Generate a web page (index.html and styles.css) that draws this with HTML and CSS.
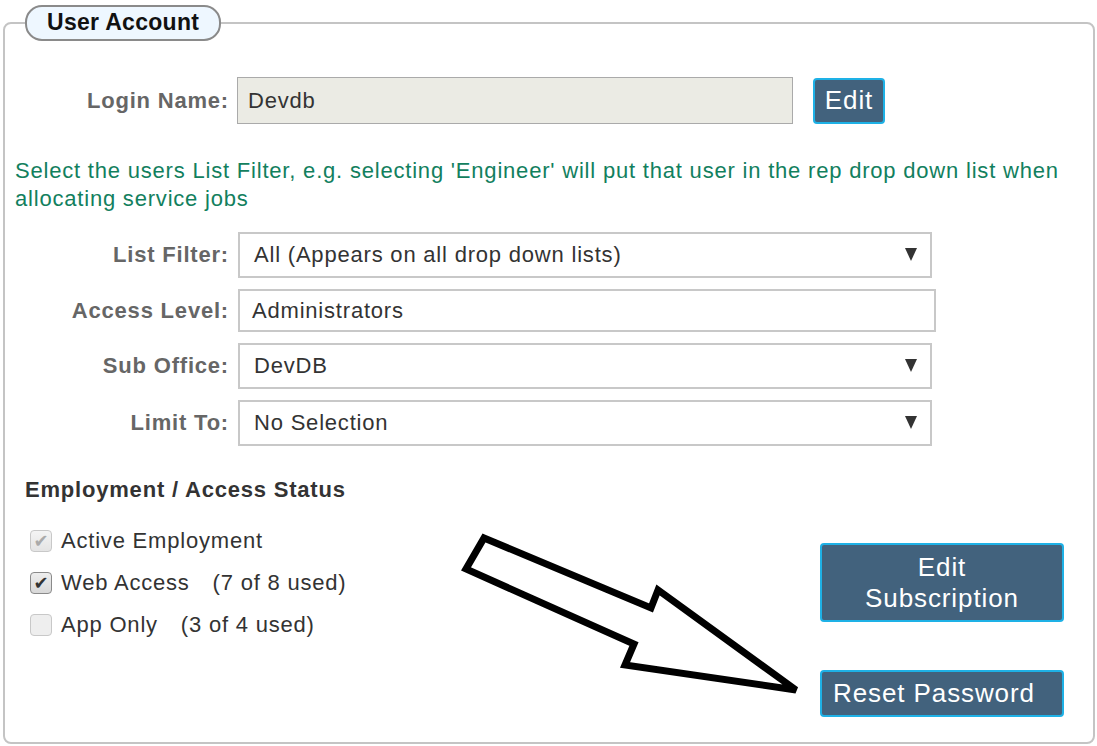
FILE: index.html
```html
<!DOCTYPE html>
<html lang="en">
<head>
  <meta charset="UTF-8" />
  <meta name="viewport" content="width=device-width, initial-scale=1.0" />
  <title>User Account</title>
  <link rel="stylesheet" href="styles.css">
</head>
<body>

  <fieldset class="account">
    <legend class="account-title">User Account</legend>

    <div class="login-row">
      <span class="field-label">Login Name:</span>
      <div class="text-box login-box">Devdb</div>
      <button class="btn btn-edit">Edit</button>
    </div>

    <p class="hint">Select the users List Filter, e.g. selecting 'Engineer' will put that user in the rep drop down list when allocating service jobs</p>

    <div class="form-list">
      <div class="form-row">
        <span class="field-label">List Filter:</span>
        <div class="text-box select-box">All (Appears on all drop down lists)</div>
      </div>
      <div class="form-row">
        <span class="field-label">Access Level:</span>
        <div class="text-box input-box">Administrators</div>
      </div>
      <div class="form-row">
        <span class="field-label">Sub Office:</span>
        <div class="text-box select-box">DevDB</div>
      </div>
      <div class="form-row">
        <span class="field-label">Limit To:</span>
        <div class="text-box select-box">No Selection</div>
      </div>
    </div>

    <div class="status-area">
      <div class="status">
        <h3 class="status-title">Employment / Access Status</h3>
        <ul class="checks">
          <li><span class="check check-disabled">&#10004;</span>Active Employment</li>
          <li><span class="check check-on">&#10004;</span>Web Access <span class="used">(7 of 8 used)</span></li>
          <li><span class="check check-off"></span>App Only <span class="used">(3 of 4 used)</span></li>
        </ul>
      </div>
      <div class="side-buttons">
        <button class="btn btn-sub">Edit<br>Subscription</button>
        <button class="btn btn-reset">Reset Password</button>
      </div>
    </div>
  </fieldset>

  <!-- pointer drawn over the form -->
  <svg class="pointer" width="360" height="180" viewBox="455 526 360 180">
    <path d="M484,538 L651,608 L658,590 L796,690 L625,665 L634,644 L466,569 Z"
          fill="white" stroke="black" stroke-width="7" stroke-linejoin="miter" />
  </svg>

</body>
</html>
```

FILE: styles.css
```css
body {
  margin: 0;
  font-family: "Liberation Sans", Arial, sans-serif;
  background-color: white;
  color: #333;
  position: relative;
}

.account {
  margin: 5px 2px 0 3px;
  padding: 0 10px 0 10px;
  height: 739px;
  box-sizing: border-box;
  border: 2px solid #c4c4c4;
  border-radius: 8px;
  min-width: 0;
}

.account-title {
  margin-left: 10px;
  padding: 2px 20px 3px;
  background-color: #eef7ff;
  border: 2px solid #8a8a8a;
  border-radius: 17px;
  font-size: 23px;
  letter-spacing: 0.3px;
  font-weight: bold;
  color: #111;
}

.field-label {
  width: 214px;
  text-align: right;
  font-size: 22px;
  letter-spacing: 0.8px;
  font-weight: bold;
  color: #666;
  flex-shrink: 0;
  white-space: nowrap;
}

.login-row {
  display: flex;
  align-items: center;
  gap: 8px;
  margin-top: 36px;
}

.text-box {
  box-sizing: border-box;
  border: 2px solid #c8c8c8;
  background-color: white;
  font-size: 22px;
  letter-spacing: 0.8px;
  color: #333;
  display: flex;
  align-items: center;
}

.login-box {
  width: 556px;
  height: 47px;
  padding-left: 10px;
  background-color: #ebebe4;
  border-color: #aaa;
  border-width: 1px;
}

.btn {
  font-family: "Liberation Sans", Arial, sans-serif;
  background-color: #42627d;
  color: white;
  border: 2px solid #1eb1e6;
  border-radius: 4px;
  letter-spacing: 0.9px;
  cursor: pointer;
}

.btn-edit {
  margin-left: 12px;
  width: 72px;
  height: 46px;
  font-size: 26px;
  padding: 0;
}

.hint {
  margin: 33px 0 0;
  font-size: 22px;
  letter-spacing: 0.8px;
  line-height: 28px;
  color: #12805e;
}

.form-list {
  margin-top: 19px;
  display: flex;
  flex-direction: column;
  gap: 11px;
}

.form-row {
  display: flex;
  align-items: center;
  gap: 9px;
}

.select-box {
  width: 694px;
  height: 46px;
  padding-left: 14px;
  position: relative;
}

.select-box::after {
  content: '';
  position: absolute;
  right: 13px;
  top: 14px;
  border-left: 6px solid transparent;
  border-right: 6px solid transparent;
  border-top: 13px solid #333;
}

.input-box {
  width: 698px;
  height: 43px;
  padding-left: 12px;
}

.status-area {
  display: flex;
  justify-content: space-between;
  margin-top: 31px;
}

.status-title {
  margin: 0 0 0 10px;
  font-size: 22px;
  letter-spacing: 0.8px;
  color: #333;
}

.checks {
  list-style: none;
  margin: 17px 0 0;
  padding: 0 0 0 15px;
  font-size: 22px;
  letter-spacing: 0.8px;
}

.checks li {
  display: flex;
  align-items: center;
  height: 42px;
  white-space: pre;
}

.used {
  margin-left: 16px;
}

.check {
  box-sizing: border-box;
  width: 22px;
  height: 22px;
  margin-right: 9px;
  border-radius: 4px;
  border: 1px solid #c8c8c8;
  background: linear-gradient(#f4f4f4, #e4e4e4);
  font-family: "DejaVu Sans", sans-serif;
  font-size: 18px;
  letter-spacing: 0;
  line-height: 20px;
  text-align: center;
}

.check-disabled {
  color: #aaa;
}

.check-on {
  border-color: #8a8a8a;
  background: linear-gradient(#eee, #d8d8d8);
  color: #333;
}

.check-off {
  background: #eee;
}

.side-buttons {
  display: flex;
  flex-direction: column;
  gap: 48px;
  margin-top: 66px;
  margin-right: 19px;
}

.btn-sub {
  width: 244px;
  height: 79px;
  font-size: 26px;
  line-height: 31px;
  padding: 0;
}

.btn-reset {
  width: 244px;
  height: 47px;
  font-size: 26px;
  text-align: left;
  padding: 0 0 0 11px;
}

.pointer {
  position: absolute;
  left: 455px;
  top: 526px;
}
```
